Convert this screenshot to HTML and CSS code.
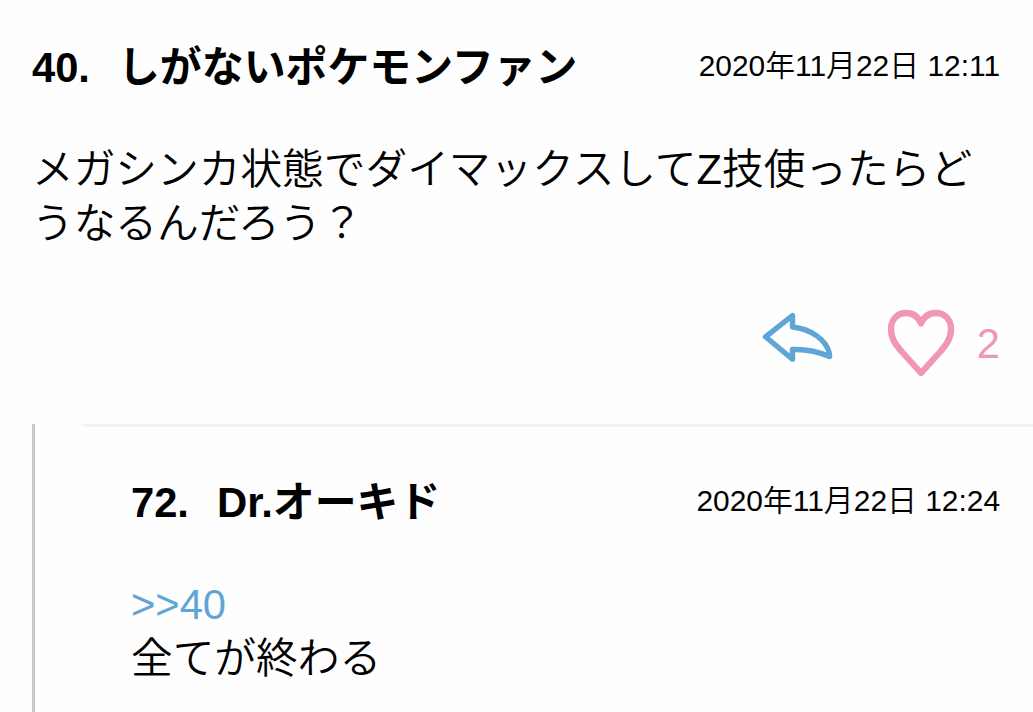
FILE: index.html
```
<!DOCTYPE html>
<html lang="ja">
<head>
    <meta charset="UTF-8">
    <meta name="viewport" content="width=device-width, initial-scale=1.0">
    <title>コメント</title>
    <link rel="stylesheet" href="styles.css">
</head>
<body>
<article class="comment">
    <header class="comment-header">
        <div class="comment-author"><span class="comment-number">40.</span><span class="comment-name">しがないポケモンファン</span></div>
        <time class="comment-date">2020年11月22日 12:11</time>
    </header>
    <p class="comment-body">メガシンカ状態でダイマックスしてZ技使ったらどうなるんだろう？</p>
    <div class="comment-actions">
        <svg class="icon-reply" width="72" height="52" viewBox="0 0 72 52">
            <path d="M3.500 25.800 L30.500 4.500 V16 C48 18 64.500 28 67.500 43 V45.500 C56 40.500 43 38 30.500 38.500 V48.300 Z"/>
        </svg>
        <svg class="icon-heart" width="68" height="68" viewBox="0 0 68 68">
            <path d="M34 14.500 C31 7 25.500 4 19 4 C10.500 4 4 10.500 4 20 C4 30 9 36 15 43 L34 64 L53 43 C59 36 64 30 64 20 C64 10.500 57.500 4 49 4 C42.500 4 37 7 34 14.500 Z"/>
        </svg>
        <span class="like-count">2</span>
    </div>
</article>
<div class="replies">
    <article class="comment reply">
        <header class="comment-header">
            <div class="comment-author"><span class="comment-number">72.</span><span class="comment-name">Dr.オーキド</span></div>
            <time class="comment-date">2020年11月22日 12:24</time>
        </header>
        <p class="comment-body"><a class="anchor">&gt;&gt;40</a><br>全てが終わる</p>
    </article>
</div>
</body>
</html>
```

FILE: styles.css
```
* {
    box-sizing: border-box;
}

body {
    margin: 0;
    height: 712px;
    display: flex;
    flex-direction: column;
    overflow: hidden;
    background-color: #fefefe;
    color: #000;
    font-family: "Liberation Sans", "Noto Sans CJK JP", sans-serif;
    font-size: 41.7px;
    line-height: 54px;
}

/* Comment */
.comment {
    height: 424px;
    padding: 41px 33px 0 32px;
}

.comment-header {
    display: flex;
    justify-content: space-between;
    align-items: flex-start;
    height: 54px;
    white-space: nowrap;
}

.comment-author {
    display: flex;
    gap: 28px;
    font-weight: bold;
}

.comment-name {
    font-size: 41.9px;
}

.comment-date {
    font-size: 29.9px;
    font-weight: 350;
    line-height: 50px;
}

.comment-body {
    margin: 48px 0 0;
    font-weight: 350;
}

/* Reply and like buttons */
.comment-actions {
    display: flex;
    justify-content: flex-end;
    align-items: center;
    height: 68px;
    margin-top: 58px;
    color: #ef97b3;
}

.icon-reply,
.icon-heart {
    fill: none;
    stroke-linejoin: round;
    stroke-linecap: round;
}

.icon-reply {
    stroke: #5fa5d5;
    stroke-width: 5.4;
    margin: 0 53px 12px 0;
}

.icon-heart {
    stroke: #ef97b3;
    stroke-width: 6.3;
    margin-right: 22px;
}

.like-count {
    padding-top: 2px;
}

/* Nested replies */
.replies {
    flex: 1;
    margin-left: 32px;
    padding-left: 48px;
    border-left: 3px solid #c9c9c9;
}

.reply {
    height: auto;
    padding: 49px 33px 0 48px;
    border-top: 3px solid #f3f3f3;
}

.anchor {
    color: #5fa5d5;
}
```
